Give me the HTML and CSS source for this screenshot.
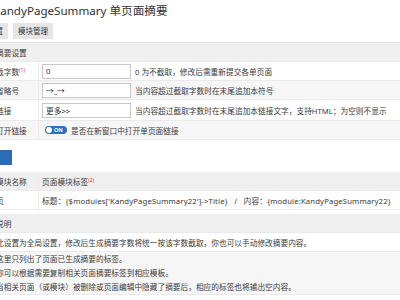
FILE: index.html
```html
<!DOCTYPE html>
<html lang="zh-CN">
<head>
    <meta charset="UTF-8">
    <title>KandyPageSummary 单页面摘要</title>
    <link rel="stylesheet" href="styles.css">
</head>
<body>
    <div class="main">
        <!-- 상단 타이틀 -->
        <h2 class="tit">KandyPageSummary 单页面摘要</h2>

        <!-- 메뉴 탭 -->
        <div class="tabs">
            <a href="#" class="tab">设置</a>
            <a href="#" class="tab">模块管理</a>
        </div>

        <!-- 1. 摘要设置 -->
        <table class="tb first">
            <tr class="hd"><th colspan="2">摘要设置</th></tr>
            <tr>
                <td class="lb">截字数<sup>(1)</sup></td>
                <td><input class="ipt" type="text" value="0"><span class="tip">0 为不截取，修改后需重新提交各单页面</span></td>
            </tr>
            <tr class="alt">
                <td class="lb">省略号</td>
                <td><input class="ipt" type="text" value="→_→"><span class="tip">当内容超过截取字数时在末尾追加本符号</span></td>
            </tr>
            <tr class="tall">
                <td class="lb">链接</td>
                <td><input class="ipt" type="text" value="更多>>"><span class="tip">当内容超过截取字数时在末尾追加本链接文字，支持HTML；为空则不显示</span></td>
            </tr>
            <tr class="alt">
                <td class="lb">打开链接</td>
                <td><span class="tog"><i></i>ON</span><span class="tip">是否在新窗口中打开单页面链接</span></td>
            </tr>
        </table>

        <!-- 저장 버튼 -->
        <div class="btns">
            <button type="button" class="btn"></button>
        </div>

        <!-- 2. 模块标签 -->
        <table class="tb gap">
            <tr class="hd">
                <th class="lb">模块名称</th>
                <th>页面模块标签<sup>(2)</sup></th>
            </tr>
            <tr>
                <td class="lb">页</td>
                <td class="code">标题：{$modules['KandyPageSummary22']-&gt;Title}&nbsp;&nbsp;&nbsp;/&nbsp;&nbsp;&nbsp;内容：{module:KandyPageSummary22}</td>
            </tr>
        </table>

        <!-- 3. 说明 -->
        <table class="tb">
            <tr class="hd"><th>说明</th></tr>
            <tr><td>此设置为全局设置，修改后生成摘要字数将统一按该字数截取，你也可以手动修改摘要内容。</td></tr>
            <tr class="alt">
                <td class="notes">
                    <p>这里只列出了页面已生成摘要的标签。</p>
                    <p>你可以根据需要复制相关页面摘要标签到相应模板。</p>
                    <p>当相关页面（或模块）被删除或页面编辑中隐藏了摘要后，相应的标签也将输出空内容。</p>
                </td>
            </tr>
        </table>
    </div>
</body>
</html>
```

FILE: styles.css
```css
html,
body {
    margin: 0;
    padding: 0;
    background: #fff;
}

body {
    font-family: "Noto Sans", "Noto Sans CJK SC", sans-serif;
    font-size: 7.7px;
    color: #3a3a3a;
    overflow: hidden;
}

/* 왼쪽이 잘린 화면 */
.main {
    width: 640px;
    margin-left: -7px;
}

/* 타이틀 */
.tit {
    margin: 0;
    padding-top: 2px;
    font-size: 11.6px;
    font-weight: normal;
    line-height: 17px;
    color: #333;
}

/* 탭 */
.tabs {
    display: flex;
    gap: 5px;
    margin: 4px 0 3px -10px;
}

.tab {
    padding: 3px 5px;
    line-height: 10px;
    font-size: 7.5px;
    background: #e6e6e6;
    color: #333;
    text-decoration: none;
}

/* 테이블 공통 */
.tb {
    width: 100%;
    border-collapse: collapse;
}

.first {
    border-top: 1px solid #e4e4e4;
}

.gap {
    margin-bottom: 4px;
}

.tb th,
.tb td {
    height: 18px;
    padding: 0 4px 0 3px;
    text-align: left;
    font-weight: normal;
    border-bottom: 1px solid #eaeaea;
}

.tall td {
    height: 20px;
}

.hd th {
    background: #efefef;
}

.alt td {
    background: #f6f6f6;
}

.lb {
    width: 38px;
    white-space: nowrap;
    border-right: 1px solid #ececec;
}

sup {
    font-size: 5px;
    line-height: 0;
    color: #d33;
    vertical-align: 3px;
}

/* 입력박스 */
.ipt {
    width: 89px;
    height: 15px;
    box-sizing: border-box;
    margin: 0;
    padding: 0 3px;
    border: 1px solid #c8c8c8;
    font: inherit;
    color: #333;
    vertical-align: middle;
}

.tip {
    margin-left: 4px;
    vertical-align: middle;
}

/* 토글 */
.tog {
    display: inline-flex;
    align-items: center;
    gap: 2px;
    width: 22px;
    height: 8px;
    box-sizing: border-box;
    margin-left: 3px;
    padding: 0 1px;
    border-radius: 4px;
    background: #2f6fba;
    color: #fff;
    font-size: 5.5px;
    font-weight: bold;
    vertical-align: middle;
}

.tog i {
    width: 6px;
    height: 6px;
    border-radius: 50%;
    background: #fff;
}

/* 저장 버튼 */
.btns {
    padding: 10px 0 7px;
}

.btn {
    display: block;
    width: 19px;
    height: 15px;
    border: 0;
    padding: 0;
    background: #2d6db4;
}

/* 모듈 태그 (라틴 글자가 조금 넓음) */
.code {
    white-space: nowrap;
    letter-spacing: 0.15px;
}

.notes {
    padding-top: 3px;
    padding-bottom: 4px;
}

.notes p {
    margin: 0;
    line-height: 14px;
}
```
